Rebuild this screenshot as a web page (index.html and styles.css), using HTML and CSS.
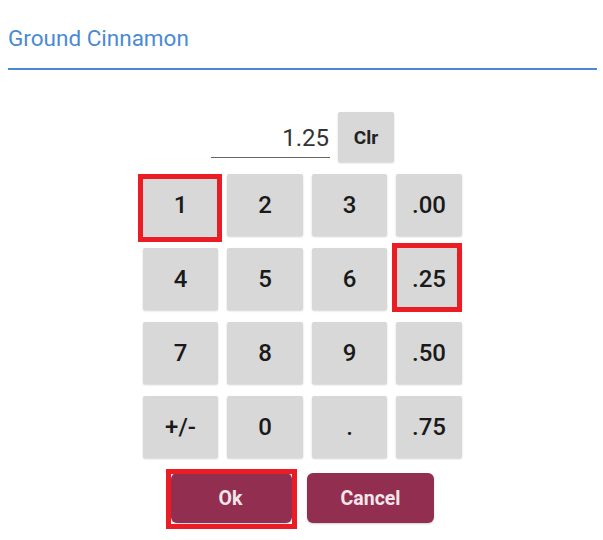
FILE: index.html
```html
<!DOCTYPE html>
<html>
<head>
<meta charset="utf-8">
<link rel="stylesheet" href="styles.css">
</head>
<body>
<div class="page">
  <div class="title">Ground Cinnamon</div>
  <div class="entry">
    <div class="display"><span class="value">1.25</span></div>
    <button class="key clr">Clr</button>
  </div>
  <div class="keypad">
    <button class="key">1</button>
    <button class="key">2</button>
    <button class="key">3</button>
    <button class="key">.00</button>
    <button class="key">4</button>
    <button class="key">5</button>
    <button class="key">6</button>
    <button class="key">.25</button>
    <button class="key">7</button>
    <button class="key">8</button>
    <button class="key">9</button>
    <button class="key">.50</button>
    <button class="key">+/-</button>
    <button class="key">0</button>
    <button class="key">.</button>
    <button class="key">.75</button>
  </div>
  <div class="actions">
    <button class="action ok">Ok</button>
    <button class="action cancel">Cancel</button>
  </div>
  <div class="mark mark-one"></div>
  <div class="mark mark-quarter"></div>
  <div class="mark mark-ok"></div>
</div>
</body>
</html>
```
FILE: styles.css
```css
* { box-sizing: border-box; }
html, body { margin: 0; padding: 0; background: #ffffff; }
body { font-family: Roboto, "Noto Sans", sans-serif; }

.page {
  position: relative;
  width: 589px;
  margin-left: 8px;
  padding-top: 25px;
  height: 540px;
}

.title {
  font-size: 22.5px;
  line-height: 26px;
  color: #4a8ad5;
  padding-bottom: 17px;
  border-bottom: 2px solid #4a88d0;
}

.entry {
  margin-top: 42px;
  display: flex;
  justify-content: center;
  align-items: flex-start;
  gap: 8px;
}

.display {
  width: 119px;
  height: 46px;
  display: flex;
  justify-content: flex-end;
  align-items: flex-end;
  padding: 0 1px 7px 0;
  border-bottom: 1px solid #666;
}
.value {
  font-size: 24px;
  line-height: 24px;
  color: #333;
}

.key {
  border: none;
  margin: 0;
  padding: 0;
  background: #d7d8d7;
  border-radius: 2px;
  box-shadow: 0 1px 2px rgba(0,0,0,0.18);
  font-family: Roboto, "Noto Sans", sans-serif;
  font-size: 24px;
  font-weight: 500;
  color: #1a1a1a;
}
.clr {
  width: 56px;
  height: 50px;
  font-size: 19px;
  font-weight: 700;
  color: #222;
}

.keypad {
  margin: 12px auto 0;
  width: 319px;
  display: grid;
  grid-template-columns: 75px 76px 75px 66px;
  grid-auto-rows: 62px;
  column-gap: 9px;
  row-gap: 12px;
}

.actions {
  margin-top: 15px;
  display: flex;
  justify-content: center;
  gap: 15px;
}
.action {
  height: 50px;
  border: none;
  border-radius: 6px;
  background: #922f50;
  color: #f3e6ea;
  font-family: Roboto, "Noto Sans", sans-serif;
  font-size: 19.5px;
  font-weight: 700;
  box-shadow: 0 1px 2px rgba(0,0,0,0.2);
}
.ok { width: 121px; padding-left: 4px; }
.cancel { width: 127px; }

.mark {
  position: absolute;
  border: 5px solid #ec1c24;
}
.mark-one { left: 130px; top: 174px; width: 84px; height: 68px; }
.mark-quarter { left: 384px; top: 243px; width: 70px; height: 69px; }
.mark-ok { left: 158px; top: 469px; width: 131px; height: 60px; }
```
